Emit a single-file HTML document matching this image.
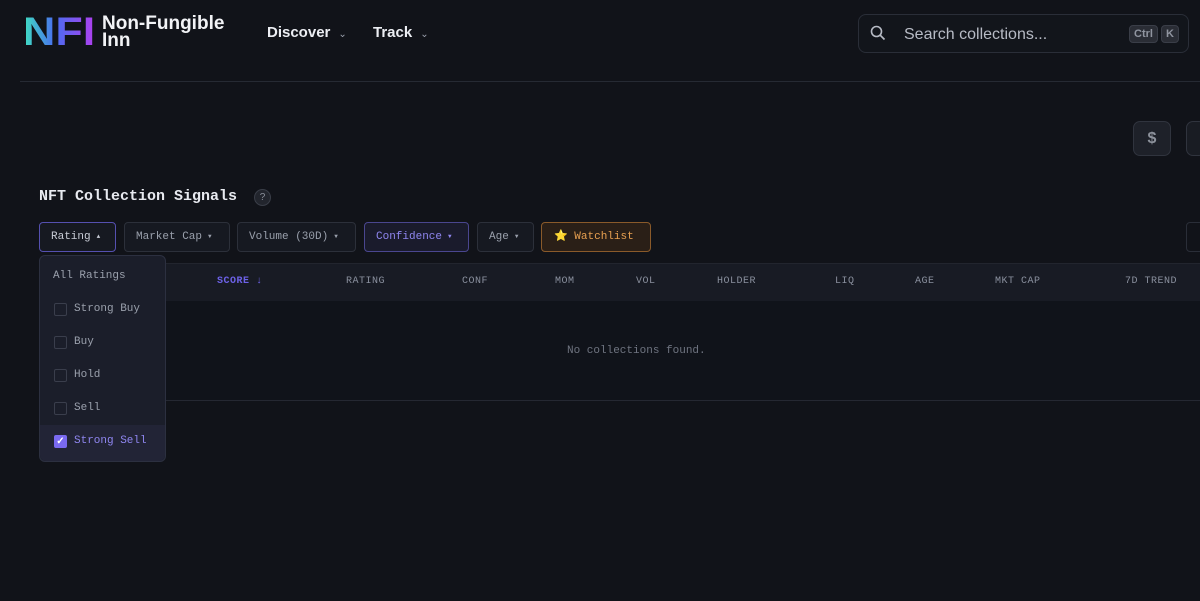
<!DOCTYPE html>
<html><head><meta charset="utf-8"><style>
*{margin:0;padding:0;box-sizing:border-box}
body{width:1200px;height:601px;overflow:hidden;background:#111319;font-family:"Liberation Mono",monospace;color:#aeb3c0;position:relative}
.abs{position:absolute}
.sans{font-family:"Liberation Sans",sans-serif}
.logo{left:23px;top:10px;font:900 40px "Liberation Sans",sans-serif;letter-spacing:0px;background:linear-gradient(90deg,#3fe0c0,#4a6cf0 45%,#b040f0);-webkit-background-clip:text;color:transparent;line-height:44px;transform:scaleX(1.12);transform-origin:left}
.brand{left:102px;top:15px;font:bold 19px/17px "Liberation Sans",sans-serif;color:#f2f3f6}
.nav{top:24px;font:bold 15px "Liberation Sans",sans-serif;color:#eceef3}
.nav span{font-size:10px;color:#9aa0ad;margin-left:8px;font-weight:normal}
.search{left:858px;top:14px;width:331px;height:39px;border:1px solid #2a2e38;border-radius:8px;background:#12151b}
.kbd{top:10px;height:18px;border:1px solid #3a3e48;background:#2a2d35;border-radius:4px;font:bold 11px "Liberation Sans",sans-serif;color:#9095a0;text-align:center;line-height:16px}
.btn{top:222px;height:30px;border:1px solid #2c303a;border-radius:4px;background:#161921;font-size:11px;color:#9aa0ac;padding:0 11px;line-height:28px;white-space:nowrap}
.btn i{font-style:normal;font-size:6px;margin-left:6px;vertical-align:1px}
.th{top:276px;font-size:10px;color:#8a909e;letter-spacing:.5px}
.menu{left:39px;top:255px;width:127px;height:207px;background:#1b1e2a;border:1px solid #2c3040;border-radius:6px}
.item{position:absolute;left:14px;font-size:11px;color:#9aa0ac}
.cb{position:absolute;left:14px;width:13px;height:13px;border:1px solid #3a3e4c;border-radius:2px}
</style></head><body>
<div class="abs logo">NFI</div>
<div class="abs brand">Non-Fungible<br>Inn</div>
<div class="abs nav" style="left:267px">Discover<span>⌄</span></div>
<div class="abs nav" style="left:373px">Track<span>⌄</span></div>
<div class="abs search">
<svg class="abs" style="left:11px;top:10px" width="16" height="16" viewBox="0 0 16 16"><circle cx="6.5" cy="6.5" r="5" fill="none" stroke="#b8bcc6" stroke-width="1.6"/><path d="M10.2 10.2L14.5 14.5" stroke="#b8bcc6" stroke-width="1.7"/></svg>
<div class="abs sans" style="left:45px;top:11px;font-size:16px;color:#b7bbc5">Search collections...</div>
<div class="abs kbd" style="left:270px;width:29px">Ctrl</div>
<div class="abs kbd" style="left:302px;width:18px">K</div>
</div>
<div class="abs" style="left:20px;top:81px;width:1180px;height:1px;background:#262a33"></div>
<div class="abs" style="left:1133px;top:121px;width:38px;height:35px;border:1px solid #30343e;border-radius:7px;background:#1e2129;font:bold 16px/33px 'Liberation Sans',sans-serif;text-align:center;color:#8d929c">$</div>
<div class="abs" style="left:1186px;top:121px;width:20px;height:35px;border:1px solid #30343e;border-radius:7px;background:#191c23"></div>
<div class="abs" style="left:39px;top:188px;font-size:15px;font-weight:bold;color:#e8eaf0">NFT Collection Signals</div>
<div class="abs" style="left:254px;top:189px;width:17px;height:17px;border-radius:50%;border:1px solid #3a3e48;background:#22252d;font:10px/15px 'Liberation Sans',sans-serif;text-align:center;color:#8a8f9a">?</div>
<div class="abs btn" style="left:39px;width:77px;border-color:#5550b0;color:#c8ccd6">Rating<i>▲</i></div>
<div class="abs btn" style="left:124px;width:106px">Market Cap<i>▼</i></div>
<div class="abs btn" style="left:237px;width:119px">Volume (30D)<i>▼</i></div>
<div class="abs btn" style="left:364px;width:105px;border-color:#4a468f;background:#1a1b2c;color:#8f86f0">Confidence<i>▼</i></div>
<div class="abs btn" style="left:477px;width:57px">Age<i>▼</i></div>
<div class="abs btn" style="left:541px;width:110px;border-color:#8a5a2a;background:#2a1f17;color:#e8a050;padding-left:12px">⭐ Watchlist</div>
<div class="abs" style="left:1186px;top:222px;width:20px;height:30px;border:1px solid #2a2e38;border-radius:4px"></div>
<div class="abs" style="left:39px;top:263px;width:1161px;height:38px;background:#181b24;border-top:1px solid #22252e"></div>
<div class="abs" style="left:39px;top:301px;width:1161px;height:100px;background:#10131a;border-bottom:1px solid #252832"></div>
<div class="abs th" style="left:217px;color:#6d62e8;font-weight:bold">SCORE ↓</div>
<div class="abs th" style="left:346px">RATING</div>
<div class="abs th" style="left:462px">CONF</div>
<div class="abs th" style="left:555px">MOM</div>
<div class="abs th" style="left:636px">VOL</div>
<div class="abs th" style="left:717px">HOLDER</div>
<div class="abs th" style="left:835px">LIQ</div>
<div class="abs th" style="left:915px">AGE</div>
<div class="abs th" style="left:995px">MKT CAP</div>
<div class="abs th" style="left:1125px">7D TREND</div>
<div class="abs" style="left:567px;top:345px;font-size:11px;color:#6f7480">No collections found.</div>
<div class="abs menu">
<div class="item" style="top:14px;left:13px">All Ratings</div>
<div class="cb" style="top:47px"></div><div class="item" style="top:47px;left:34px">Strong Buy</div>
<div class="cb" style="top:80px"></div><div class="item" style="top:80px;left:34px">Buy</div>
<div class="cb" style="top:113px"></div><div class="item" style="top:113px;left:34px">Hold</div>
<div class="cb" style="top:146px"></div><div class="item" style="top:146px;left:34px">Sell</div>
<div class="abs" style="left:0;top:169px;width:125px;height:36px;background:#222436;border-radius:0 0 6px 6px"></div>
<div class="cb" style="top:179px;background:#7a6af0;border-color:#7a6af0;color:#fff;font:bold 10px/11px 'Liberation Sans',sans-serif;text-align:center">✓</div>
<div class="item" style="top:179px;left:34px;color:#8f86f0">Strong Sell</div>
</div>
</body></html>
